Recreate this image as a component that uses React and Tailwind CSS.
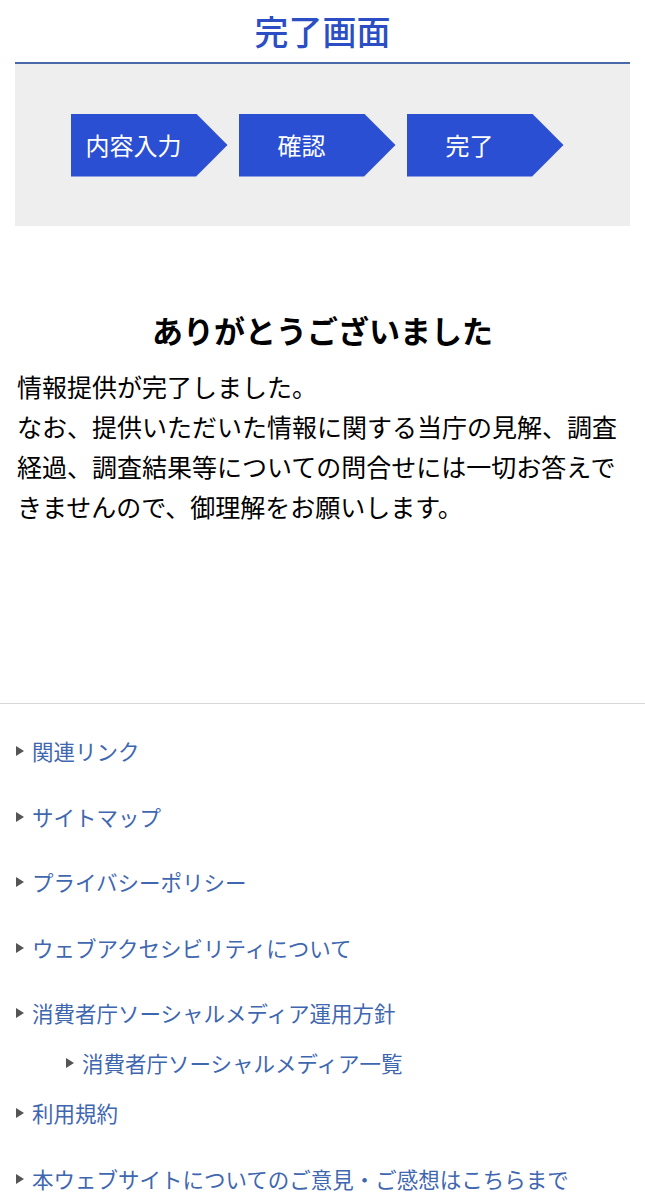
const STEPS = ["内容入力", "確認", "完了"]

const LINKS = [
  { label: "関連リンク", mt: "mt-0" },
  { label: "サイトマップ", mt: "mt-[33.5px]" },
  { label: "プライバシーポリシー", mt: "mt-[33.5px]" },
  { label: "ウェブアクセシビリティについて", mt: "mt-[33.5px]" },
  { label: "消費者庁ソーシャルメディア運用方針", mt: "mt-[33.5px]" },
  { label: "消費者庁ソーシャルメディア一覧", mt: "mt-[18px]", sub: true },
  { label: "利用規約", mt: "mt-[18px]" },
  { label: "本ウェブサイトについてのご意見・ご感想はこちらまで", mt: "mt-[34px]" },
]

function Triangle() {
  return (
    <svg width="8" height="10" viewBox="0 0 8 10" className="shrink-0">
      <polygon points="0,0 8,5 0,10" fill="#555555" />
    </svg>
  )
}

export default function App() {
  return (
    <main className="min-h-screen bg-white font-['Noto_Sans_CJK_JP',sans-serif] pb-10">
      {/* タイトル */}
      <div className="mx-[15px] h-[64px] flex items-center justify-center border-b-2 border-[#4a67a9]">
        <h1 className="text-[34px] leading-none font-medium text-[#2b4ec4]">完了画面</h1>
      </div>

      {/* ステップ */}
      <div className="mx-[15px] h-[162px] bg-[#eeeeee] flex items-center justify-center">
        {STEPS.map((step) => (
          <div
            key={step}
            className="w-[157px] h-[63px] mr-[11px] bg-[#2b4fd3] flex items-center justify-center pr-[31px] [clip-path:polygon(0_0,80%_0,100%_50%,80%_100%,0_100%)]"
          >
            <span className="text-white text-[24px] leading-none">{step}</span>
          </div>
        ))}
      </div>

      {/* 本文 */}
      <h2 className="mt-[84px] text-center text-[31px] leading-[40px] font-bold text-black">
        ありがとうございました
      </h2>
      <div className="mt-[16px] pl-[17px] pr-[16px] text-[25px] leading-[40px] text-black">
        <p>情報提供が完了しました。</p>
        <p>
          なお、提供いただいた情報に関する当庁の見解、調査経過、調査結果等についての問合せには一切お答えできませんので、御理解をお願いします。
        </p>
      </div>

      {/* フッター */}
      <div className="mt-[177px] border-t border-[#d8d8d8]">
        <ul className="pt-[31px]">
          {LINKS.map((link) => (
            <li
              key={link.label}
              className={`${link.mt} ${link.sub ? "pl-[66px]" : "pl-[16px]"} flex items-center gap-[8px] h-[32px]`}
            >
              <Triangle />
              <a href="#" className="text-[21.5px] leading-[32px] text-[#3f67b0] whitespace-nowrap">
                {link.label}
              </a>
            </li>
          ))}
        </ul>
      </div>
    </main>
  )
}
